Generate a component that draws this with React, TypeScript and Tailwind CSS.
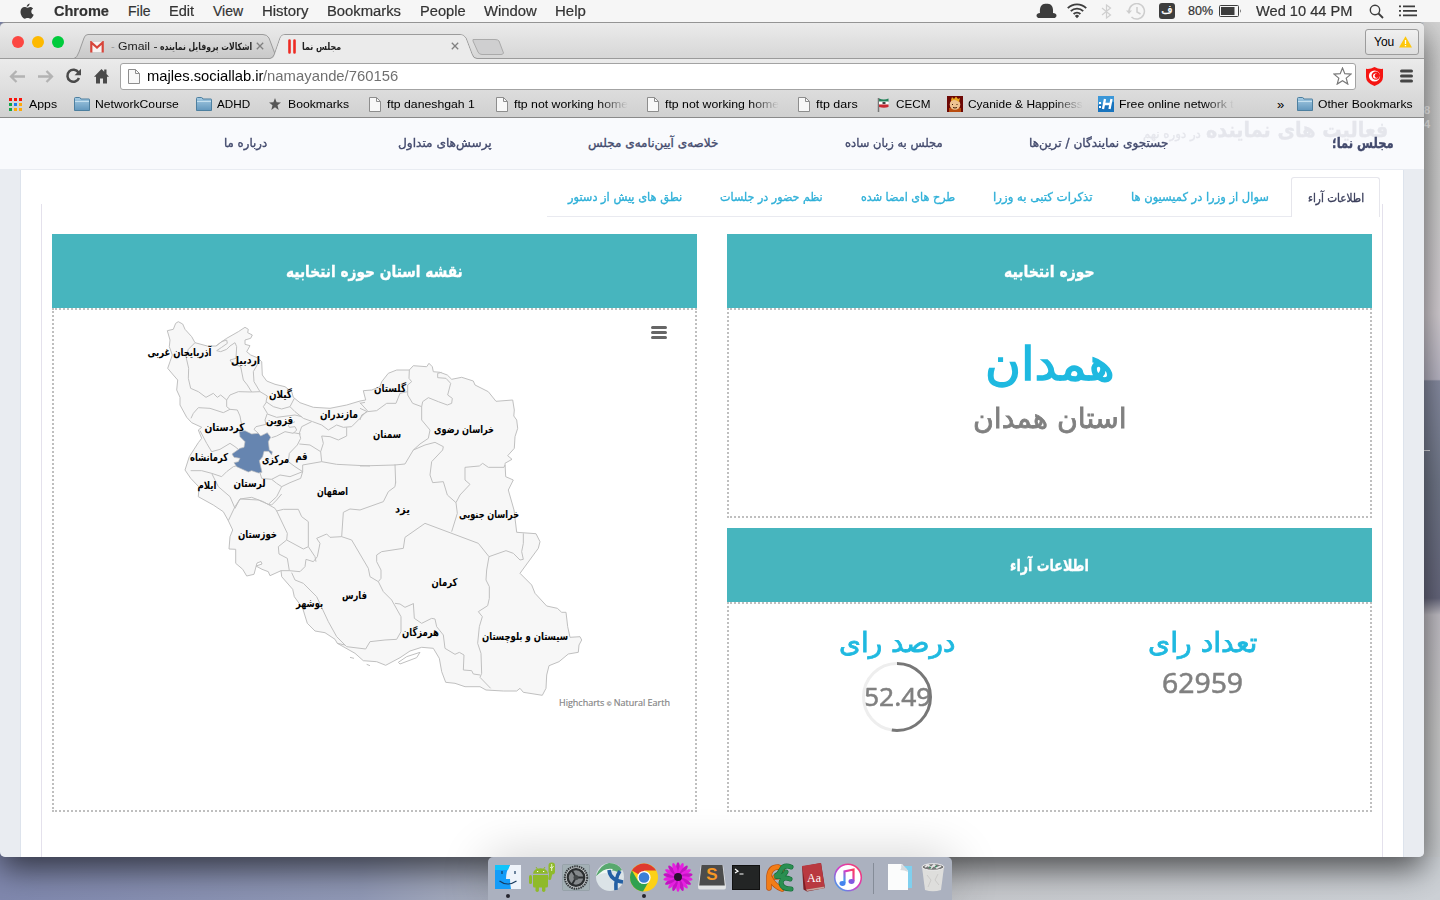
import { useLayoutEffect, useRef } from "react";
import type { ReactNode } from "react";

const FA = "font-['DejaVu_Sans','Noto_Sans',sans-serif]";
const MEDIUM = "[-webkit-text-stroke:0.35px_currentColor]";
const HEAVY = "[-webkit-text-stroke:0.8px_currentColor]";

/* Squeezes or stretches one line of text to the width of its box. */
function Fit({ className = "", rtl = false, children }: { className?: string; rtl?: boolean; children: ReactNode }) {
  const outer = useRef<HTMLSpanElement>(null);
  const inner = useRef<HTMLSpanElement>(null);
  useLayoutEffect(() => {
    if (outer.current && inner.current) {
      inner.current.style.transform = `scaleX(${outer.current.clientWidth / inner.current.offsetWidth})`;
    }
  }, []);
  return (
    <span ref={outer} dir="ltr" className={`flex shrink-0 items-center justify-start leading-none ${className}`}>
      <span ref={inner} dir={rtl ? "rtl" : "ltr"} className="inline-block shrink-0 origin-left whitespace-nowrap">
        {children}
      </span>
    </span>
  );
}

function MenuBar() {
  return (
    <div className="relative z-20 flex h-[22px] w-full shrink-0 items-center bg-[#f6f6f6] text-[14px] text-[#333] [-webkit-text-stroke:0.2px_#333]">
      <svg className="ml-[20px] h-[17px] w-[14px] shrink-0" viewBox="0 0 14 17" fill="#3d3d3d">
        <path d="M9.6.4c.1 1.700-1.300 3.300-2.900 3.300C6.500 2.200 8 .6 9.600.4zM7.200 4.700c.6 0 1.600-.8 3-.8 1.200 0 2.200.6 2.900 1.500-2.700 1.600-2.200 5.300.6 6.400-.6 1.700-2 3.900-3.300 3.900-1 0-1.500-.6-2.800-.6s-1.800.6-2.800.6C2.800 15.700.5 12 .5 8.800.5 5.700 2.500 4 4.500 4c1.200 0 2.100.7 2.700.7z" />
      </svg>
      <Fit className="ml-[20px] w-[55px] font-bold">Chrome</Fit>
      <Fit className="ml-[19px] w-[23px]">File</Fit>
      <Fit className="ml-[18px] w-[25px]">Edit</Fit>
      <Fit className="ml-[19px] w-[30px]">View</Fit>
      <Fit className="ml-[19px] w-[47px]">History</Fit>
      <Fit className="ml-[18px] w-[74px]">Bookmarks</Fit>
      <Fit className="ml-[19px] w-[46px]">People</Fit>
      <Fit className="ml-[18px] w-[53px]">Window</Fit>
      <Fit className="ml-[18px] w-[31px]">Help</Fit>
      <svg className="ml-[450px] h-[16px] w-[21px] shrink-0" viewBox="0 0 21 16" fill="#3d3d3d">
        <path d="M4 10C3.500 5 5 1.500 8 1c1.500-.2 3.500-.2 5 0C16 1.500 17.500 5 17 10c2 0 3.500 1 3.500 2.400 0 1.500-1 2.600-3 2.600h-14c-2 0-3-1.100-3-2.600C.5 11 2 10 4 10z" />
      </svg>
      <svg className="ml-[10px] h-[16px] w-[20px] shrink-0" viewBox="0 0 20 16" fill="none" stroke="#3d3d3d" strokeWidth="1.900">
        <path d="M.8 5.200a13 13 0 0 1 18.400 0M3.800 8.200a8.800 8.800 0 0 1 12.400 0M6.600 11a4.800 4.800 0 0 1 6.800 0" />
        <path d="M10 15.200 7.900 12.900a3 3 0 0 1 4.200 0z" fill="#3d3d3d" stroke="none" />
      </svg>
      <svg className="ml-[14px] h-[15px] w-[11px] shrink-0" viewBox="0 0 11 15" fill="none" stroke="#cfcfcf" strokeWidth="1.200">
        <path d="M1 4l8.500 7L5.500 14V1l4 3L1 11" />
      </svg>
      <svg className="ml-[14px] h-[17px] w-[20px] shrink-0" viewBox="0 0 20 17" fill="none" stroke="#cdcdcd" strokeWidth="1.500">
        <path d="M3 8.500A7.700 7.700 0 1 1 5.500 14M11 4v5l3.500 2" />
        <path d="M0 7.500h6L3 11z" fill="#cdcdcd" stroke="none" />
      </svg>
      <span className={`ml-[13px] flex h-[16px] w-[16px] shrink-0 items-center justify-center rounded-[3px] bg-[#3d3d3d] pb-[3px] text-[11px] leading-none text-white [-webkit-text-stroke:0.300px_white] ${FA}`}>ف</span>
      <Fit className="ml-[13px] w-[25px] text-[12.500px]">80%</Fit>
      <svg className="ml-[6px] h-[12px] w-[23px] shrink-0" viewBox="0 0 23 12">
        <rect x=".5" y=".5" width="19" height="11" rx="1" fill="none" stroke="#3d3d3d" />
        <rect x="2" y="2" width="13.500" height="8" fill="#3d3d3d" />
        <path d="M21 4q1.600 2 0 4z" fill="#3d3d3d" />
      </svg>
      <Fit className="ml-[14px] w-[96px]">Wed 10 44 PM</Fit>
      <svg className="ml-[17px] h-[15px] w-[15px] shrink-0" viewBox="0 0 15 15" fill="none" stroke="#3d3d3d" strokeWidth="1.400">
        <circle cx="6" cy="6" r="4.700" />
        <path d="M9.500 9.500 14 14" strokeWidth="1.800" />
      </svg>
      <svg className="ml-[15px] h-[12px] w-[18px] shrink-0" viewBox="0 0 18 12" fill="#3d3d3d">
        <path d="M0 .5h2v1.700H0zM0 5h2v1.700H0zM0 9.500h2v1.700H0zM4 .5h12v1.700H4zM4 5h14v1.700H4zM4 9.500h14v1.700H4z" />
      </svg>
    </div>
  );
}

function Cross({ className = "" }: { className?: string }) {
  return (
    <svg className={`h-[8px] w-[8px] shrink-0 ${className}`} viewBox="0 0 8 8" stroke="#808080" strokeWidth="1.300">
      <path d="M.8.8l6.400 6.400M7.200.8.800 7.200" />
    </svg>
  );
}

function TabStrip() {
  return (
    <div className="relative flex h-[36px] shrink-0 items-center bg-linear-to-b from-[#ebebeb] to-[#d6d6d6]">
      <svg className="absolute inset-0 h-[36px] w-[1424px]" viewBox="0 0 1424 36">
        <defs>
          <linearGradient id="tabOff" x2="0" y2="1">
            <stop stopColor="#dcdcdc" />
            <stop offset="1" stopColor="#c9c9c9" />
          </linearGradient>
        </defs>
        <path d="M74 35.500Q77 35 79 29L84 15Q85 11.500 88 11.500H263Q267 11.500 269 15L275 31L278 35.500" fill="url(#tabOff)" stroke="#9b9b9b" />
        <path d="M473 16.500H495Q498 16.500 499 18L503.500 30Q503 31.500 501 31.500H482Q479 31.500 478 29L473 18z" fill="#cfcfd0" stroke="#aaa" />
        <path d="M0 35.500H270Q273 35 274.500 31L280 15Q281 11.500 285 11.500H460Q464 11.500 466 15L472 31Q473.500 35.500 477 35.500H1424V36.500H0z" fill="none" stroke="#9b9b9b" />
        <path d="M271 36Q274 35 275 31L280.500 15Q281.500 12 285 12H460Q463.500 12 465.500 15L471.500 31Q473 35.500 476 36z" fill="#ebebeb" />
      </svg>
      <div className="relative flex h-full w-full items-center pt-[2px]">
        <span className="ml-[12px] h-[12px] w-[12px] rounded-full bg-[#fc4742]" />
        <span className="ml-[8px] h-[12px] w-[12px] rounded-full bg-[#fdb900]" />
        <span className="ml-[8px] h-[12px] w-[12px] rounded-full bg-[#00cb3c]" />
        <svg className="mt-[9px] ml-[26px] h-[12px] w-[14px] shrink-0" viewBox="0 0 14 12">
          <path d="M1 1h12v10H1z" fill="#f7f2f1" />
          <path d="M1.300 11.500V1.500L7 6.500l5.700-5v10" fill="none" stroke="#d8453a" strokeWidth="2.200" />
        </svg>
        <Fit className="mt-[9px] ml-[7px] w-[4px] text-[11px] text-[#999]">-</Fit>
        <Fit className="mt-[9px] ml-[3px] w-[39px] text-[11px] text-[#222]">Gmail -</Fit>
        <Fit rtl className={`mt-[9px] ml-[3px] w-[92px] text-[10px] font-bold text-[#222] ${FA}`}>اشکالات پروفایل نماینده</Fit>
        <Cross className="mt-[8px] ml-[4px]" />
        <svg className="mt-[9px] ml-[24px] h-[15px] w-[8px] shrink-0" viewBox="0 0 8 15" stroke="#ee2b23" strokeWidth="2.600" strokeLinecap="round">
          <path d="M1.500 1.500v12M6.500 1.500v12" />
        </svg>
        <Fit rtl className={`mt-[9px] ml-[6px] w-[39px] text-[10px] font-bold text-[#222] ${FA}`}>مجلس نما</Fit>
        <Cross className="mt-[8px] ml-[110px]" />
        <span className="ml-[906px] flex h-[26px] w-[54px] shrink-0 items-center rounded-[3px] border border-[#9c9c9c] bg-linear-to-b from-[#f0f0f0] to-[#dedede] text-[12px] text-black">
          <Fit className="ml-[8px] w-[20px]">You</Fit>
          <svg className="ml-[5px] h-[12px] w-[13px]" viewBox="0 0 13 12">
            <path d="M6.500.3 13 11.500H0z" fill="#fdc70c" />
            <path d="M6.500 4v4M6.500 9v1.300" stroke="#fff" strokeWidth="1.300" />
          </svg>
        </span>
      </div>
    </div>
  );
}

function DocIcon({ className = "" }: { className?: string }) {
  return (
    <svg className={`h-[15px] w-[12px] shrink-0 ${className}`} viewBox="0 0 12 15" fill="#f8f8f8" stroke="#8d8d8d">
      <path d="M.5.500h7l4 4v10H.5z" />
      <path d="M7.500.500v4h4" fill="none" />
    </svg>
  );
}

function FolderIcon({ className = "" }: { className?: string }) {
  return (
    <svg className={`h-[14px] w-[16px] shrink-0 ${className}`} viewBox="0 0 16 14">
      <defs>
        <linearGradient id="folder" x2="0" y2="1">
          <stop stopColor="#a5cbe3" />
          <stop offset="1" stopColor="#6297bd" />
        </linearGradient>
      </defs>
      <path d="M.5 13.500V1.500q0-1 1-1h4q1 0 1.300 1.500H15q.5 0 .5.500v11z" fill="url(#folder)" stroke="#4d7f9f" />
      <path d="M1 4.500h14" stroke="#c5e0ef" />
    </svg>
  );
}

function Toolbar() {
  return (
    <div className="flex h-[31px] shrink-0 items-center bg-linear-to-b from-[#ebebeb] to-[#dedede] pt-[3px]">
      <svg className="ml-[9px] h-[13px] w-[17px] shrink-0" viewBox="0 0 17 13" fill="none" stroke="#b3b3b3" strokeWidth="2.300">
        <path d="M16 6.500H2M7.500 1 2 6.500 7.500 12" />
      </svg>
      <svg className="ml-[11px] h-[13px] w-[17px] shrink-0" viewBox="0 0 17 13" fill="none" stroke="#b3b3b3" strokeWidth="2.300">
        <path d="M1 6.500h14M9.500 1 15 6.500 9.500 12" />
      </svg>
      <svg className="ml-[11px] h-[16px] w-[17px] shrink-0" viewBox="0 0 17 16">
        <path d="M13.500 4.500A6 6 0 1 0 14 10" fill="none" stroke="#4a4a4a" strokeWidth="2.500" />
        <path d="M16 .8v6.400H9.600z" fill="#4a4a4a" />
      </svg>
      <svg className="ml-[12px] h-[16px] w-[15px] shrink-0" viewBox="0 0 15 16" fill="#4a4a4a">
        <path d="M7.500 1 0 8.700h2V15.500h4v-5h3v5h4V8.700h2L12.500 6V1.500h-2.300v2.200z" />
      </svg>
      <div className="ml-[11px] flex h-[27px] w-[1236px] shrink-0 items-center rounded-[3px] border border-[#a3a3a3] bg-white font-['Liberation_Sans',Arial,sans-serif]">
        <DocIcon className="ml-[7px]" />
        <Fit className="ml-[7px] w-[116px] text-[14.500px] text-black">majles.sociallab.ir</Fit>
        <Fit className="w-[135px] text-[14.500px] text-[#707070]">/namayande/760156</Fit>
        <svg className="ml-[935px] h-[18px] w-[19px] shrink-0" viewBox="0 0 19 18" fill="none" stroke="#7a7a7a" strokeWidth="1.200">
          <path d="M9.500 1l2.300 5.700 6.200.4-4.800 4 1.600 6-5.300-3.400-5.300 3.400 1.600-6-4.800-4 6.200-.4z" />
        </svg>
      </div>
      <svg className="ml-[10px] h-[19px] w-[17px] shrink-0" viewBox="0 0 17 19">
        <path d="M8.500 0Q13 2.500 17 1.800V10q0 6-8.500 9Q0 16 0 10V1.800Q4 2.500 8.500 0z" fill="#f51512" />
        <circle cx="8.500" cy="9" r="5.600" fill="#fff" />
        <circle cx="9.800" cy="8.600" r="4.200" fill="#f51512" />
        <circle cx="9.600" cy="9" r="2.600" fill="#fff" />
        <circle cx="10.700" cy="8.800" r="2.100" fill="#f51512" />
      </svg>
      <svg className="ml-[17px] h-[14px] w-[13px] shrink-0" viewBox="0 0 13 14" stroke="#454545" strokeWidth="3" strokeLinecap="round">
        <path d="M1.500 2h10M1.500 7h10M1.500 12h10" />
      </svg>
    </div>
  );
}

const fade = "[mask-image:linear-gradient(to_right,black_75%,transparent_100%)]";
const dots = ["#f8130b", "#f8130b", "#f8130b", "#13a34a", "#1d7df3", "#fca90b", "#13a34a", "#fca90b", "#fca90b"];

function BookmarksBar() {
  return (
    <div className="flex h-[28px] shrink-0 items-center border-b border-[#8a8a8a] bg-linear-to-b from-[#dddddd] to-[#d0d0d0] pt-px text-[11px] text-black">
      <svg className="ml-[9px] h-[13px] w-[13px] shrink-0" viewBox="0 0 13 13">
        {dots.map((c, i) => (
          <rect key={i} x={(i % 3) * 5} y={Math.floor(i / 3) * 5} width="3" height="3" fill={c} />
        ))}
      </svg>
      <Fit className="ml-[7px] w-[28px]">Apps</Fit>
      <FolderIcon className="ml-[17px]" />
      <Fit className="ml-[5px] w-[84px]">NetworkCourse</Fit>
      <FolderIcon className="ml-[17px]" />
      <Fit className="ml-[5px] w-[33px]">ADHD</Fit>
      <svg className="ml-[19px] h-[12px] w-[12px] shrink-0" viewBox="0 0 12 12" fill="#555">
        <path d="M6 0l1.600 4.200 4.400.2-3.500 2.800L9.700 12 6 9.300 2.300 12l1.200-4.800L0 4.400l4.400-.2z" />
      </svg>
      <Fit className="ml-[7px] w-[61px]">Bookmarks</Fit>
      <DocIcon className="ml-[20px]" />
      <Fit className="ml-[6px] w-[88px]">ftp daneshgah 1</Fit>
      <DocIcon className="ml-[21px]" />
      <Fit className={`ml-[6px] w-[114px] ${fade}`}>ftp not working home</Fit>
      <DocIcon className="ml-[19px]" />
      <Fit className={`ml-[6px] w-[114px] ${fade}`}>ftp not working home</Fit>
      <DocIcon className="ml-[19px]" />
      <Fit className="ml-[6px] w-[42px]">ftp dars</Fit>
      <svg className="ml-[19px] h-[15px] w-[12px] shrink-0" viewBox="0 0 12 15">
        <path d="M1.500 1v14" stroke="#777" strokeWidth="1.500" />
        <path d="M2 1.500q5 2 9.500 0V5H2z" fill="#24825a" />
        <path d="M2 4.500h9.500V7.500H2z" fill="#fff" />
        <path d="M2 7.500h9.500V10Q7 11.500 2 10z" fill="#c92a32" />
        <path d="M5.500 5h3v2h-3z" fill="#444" />
      </svg>
      <Fit className="ml-[7px] w-[34px]">CECM</Fit>
      <svg className="ml-[17px] h-[16px] w-[16px] shrink-0" viewBox="0 0 16 16">
        <path d="M0 0h16v16H0z" fill="#6d0805" />
        <path d="M2 12h12v4H2z" fill="#b94d10" />
        <circle cx="8" cy="8.500" r="5.300" fill="#eec391" />
        <path d="M4 4l1-3 2 2 2-2.500L11 3l2-1-1 4Q8 2.500 4 5z" fill="#e9a81e" />
        <path d="M5.500 8v1M10 8v1M6 11.500q2 1 4 0" stroke="#40200a" fill="none" />
      </svg>
      <Fit className={`ml-[5px] w-[115px] ${fade}`}>Cyanide &amp; Happiness</Fit>
      <svg className="ml-[15px] h-[16px] w-[16px] shrink-0" viewBox="0 0 16 16">
        <path d="M0 0h16v16H0z" fill="#1873bd" />
        <path d="M0 0h16v6L0 9z" fill="#3b97d8" />
        <path d="M1 6h2v2H1zM1 10h2v2H1z" fill="#fff" />
        <path d="M7 3 5 13M13.500 3l-2 10M6 8h7" stroke="#fff" strokeWidth="2.300" />
      </svg>
      <Fit className={`ml-[5px] w-[115px] ${fade}`}>Free online network t</Fit>
      <Fit className="ml-[43px] w-[7px] text-[13px]">»</Fit>
      <FolderIcon className="ml-[13px]" />
      <Fit className="ml-[5px] w-[95px]">Other Bookmarks</Fit>
    </div>
  );
}

function SiteNav() {
  return (
    <div className={`relative flex h-[52px] shrink-0 items-center border-b border-[#e9ecf2] bg-[#f9fafd] pb-[2px] text-[12px] text-[#434a6d] ${MEDIUM} ${FA}`}>
      <div className="absolute top-[2px] left-[1143px] flex items-center text-[#e5e6ec]">
        <Fit rtl className="mt-[6px] w-[58px] text-[12px]">در دوره نهم</Fit>
        <Fit rtl className="ml-[5px] w-[182px] text-[21px] font-bold">فعالیت های نماینده</Fit>
      </div>
      <div className="relative flex items-center">
        <Fit rtl className="ml-[224px] w-[43px]">درباره ما</Fit>
        <Fit rtl className="ml-[131px] w-[94px]">پرسش‌های متداول</Fit>
        <Fit rtl className="ml-[96px] w-[130px]">خلاصه‌ی آیین‌نامه‌ی مجلس</Fit>
        <Fit rtl className="ml-[127px] w-[98px]">مجلس به زبان ساده</Fit>
        <Fit rtl className="ml-[86px] w-[139px]">جستجوی نمایندگان / ترین‌ها</Fit>
        <Fit rtl className="ml-[164px] w-[62px] text-[14px] font-bold">مجلس نما؛</Fit>
      </div>
    </div>
  );
}

function PageTabs() {
  return (
    <div className={`flex h-[40px] shrink-0 text-[12px] text-[#2fb0d8] ${MEDIUM} ${FA}`}>
      <div className="ml-[526px] flex w-[744px] items-center border-b border-[#e9eaf0]">
        <Fit rtl className="ml-[21px] w-[114px]">نطق های پیش از دستور</Fit>
        <Fit rtl className="ml-[38px] w-[103px]">نظم حضور در جلسات</Fit>
        <Fit rtl className="ml-[38px] w-[94px]">طرح های امضا شده</Fit>
        <Fit rtl className="ml-[38px] w-[100px]">تذکرات کتبی به وزرا</Fit>
        <Fit rtl className="ml-[38px] w-[138px]">سوال از وزرا در کمیسیون ها</Fit>
      </div>
      <div className="flex w-[89px] items-center rounded-t-[3px] border border-b-0 border-[#e6e6ec] pl-[16px] text-[#3b3f5c]">
        <Fit rtl className="w-[56px]">اطلاعات آراء</Fit>
      </div>
    </div>
  );
}

const outline =
  "178.3,321.7 182.7,324 185,329.3 191.7,336.7 195,342.7 207.3,346 216,346 221.7,341.7 226.7,338.3 238.3,331.7 245,327.3 248.3,329.3 247.7,332.7 252.3,335 250.7,338.3 245,340 245,344.3 250,345.7 246.7,351.7 250.7,355 258,358 261.7,361.7 262.3,375 266.7,381 275,384.3 285,386.7 291.7,391.7 293.3,397.3 300,402.7 313.3,407.3 330,408.3 346.7,405 360,401 365.7,400 363.3,390.7 371.7,390 380,386.7 381.7,381.7 388.3,373.3 396.7,370 409.3,370 413.3,365.7 426.7,366.7 429,363.3 432.3,366.7 433.3,371.7 440,372.3 447.3,375 451.7,379.3 461.7,377.3 473.3,381 475,385 488.3,391.7 496,401.3 512.7,400 514.3,410 513.8,416 516.7,420 517.7,428.3 515,436.7 514.3,448.3 507.7,455.7 512,459.3 505,463.3 505.7,476.7 513.3,480 508.3,490 514,510 516.7,532.3 536,533.7 540,541.7 538.3,548.3 520,573.3 531.7,585 535,593.3 546.7,606 557.3,608.3 561.7,612.3 566,612.3 567.7,626.7 570,637.3 580,636.7 581.7,640 579,645 578.3,652.3 568.3,654 559,661.7 549,665.7 546.7,675 546,688.3 542.3,695.3 523.3,692.3 520,688.3 516.7,691 503.3,691 486,690 480,686.7 465,686.7 455,683.3 445.7,682.3 441.7,671.7 439.3,658.3 433.3,648.3 421.7,647.3 410,651 400,657.700 385.700,665.300 376.700,661.700 363.300,660.700 355,653.300 337.300,643.300 335,639.300 325,632.700 315,631 307.300,623.300 302.700,608.300 294.300,596.700 292.700,589.300 281.700,576.700 281,570.700 270,575.700 268.300,571.700 262,569.300 256,566 262,564 261,561.500 257,563 254,574.300 246.700,576 242.700,569.300 235.700,563.300 235.700,549.300 229,549 230,536.700 232.700,530 228.300,520.700 223.300,511.700 213.300,505 198.300,496.700 199,487 190.700,478.300 185,470 189.300,456.700 198.300,442.700 201.700,438.300 198.300,430 201.700,427.300 191.700,422.700 186.700,417.300 180,405 180,397.300 176.700,390 177.700,380 173.300,375 167.700,368.300 170,361.700 172.300,355 169.300,346.700 170,340 167.300,330.700 173.300,329.300 175.700,323.300";

const hamadan =
  "328,365 345,362 365,372 385,370 392,378 412,368 422,382 415,395 418,420 427,425 425,435 416,424 402,424 398,440 388,452 396,487 385,489 365,482 355,486 320,470 312,458 325,455 330,445 312,442 306,432 330,415 342,412 345,395 330,380";

/* Province borders, grouped by map quarter: offset of the quarter and its lines in thirds of a pixel. */
const borders: { at: string; lines: string[] }[] = [
  {
    at: "translate(130 310) scale(.33333)",
    lines: [
      "195,98 175,118 168,140 176,175 175,205 182,235 205,245 228,262 250,250 262,262 272,255 290,270",
      "290,270 300,255 325,245 365,246 390,245 412,258",
      "290,270 290,290 300,298 280,308 240,295 205,293 190,310 183,325",
      "300,298 322,300 330,318 335,345 328,370",
      "258,108 275,95 290,90 292,100 275,112 260,122 272,125 290,118 300,108 315,98 320,110 318,145 300,150 305,158 332,170 340,210 352,225 365,246",
      "390,150 370,185 372,215 390,245",
      "412,258 408,275 430,290 455,297 480,290 493,265",
      "410,275 400,290 412,310 405,330 408,343 378,350 372,358 385,370",
      "480,290 495,305 520,325 548,335 575,345 595,360 620,345 640,352 665,350 690,325 712,302 690,278",
      "412,312 440,322 495,315 515,320",
      "495,335 475,345 478,352 495,350 500,360 490,370 465,365 440,378 425,383",
      "545,335 515,350 508,370 512,385 502,405 478,430 475,455 495,470 518,485",
      "508,402 540,405 572,425",
      "490,368 512,372",
      "650,352 650,378 625,390 600,380 575,378 580,400 572,425 575,455 518,465 518,485 480,500 450,495 425,508",
      "575,455 620,463 720,468",
      "210,362 230,400 245,425 270,418 300,400 315,410 325,418",
      "182,482 215,482 245,490 275,500 290,485 310,470 318,468",
      "245,490 265,530 300,560 315,595",
      "390,488 395,505 425,508 440,520 455,530 440,560 415,583 385,570 330,567 315,595",
      "455,530 480,518 512,505 518,485",
    ],
  },
  {
    at: "translate(360 340) scale(.33333)",
    lines: [
      "148,90 147,115 155,125 143,135 143,165 158,190 185,200 188,185 205,173 235,185 262,195 275,190 277,175 263,165 272,130 258,115 233,113 233,100 245,97",
      "185,200 185,240 210,270 205,295 180,312 160,330 135,372 105,375 0,378",
      "160,330 195,315 225,307 250,320 248,330 215,365 210,405 218,428 250,425 262,465 288,488",
      "15,187 0,190",
      "0,205 22,215 50,212 80,190 108,190 120,160 143,155",
      "22,215 5,225 0,240",
      "105,373 107,430",
      "435,375 432,382 385,382 368,370 358,378 315,382 315,420 330,433 300,465 288,488 292,520 275,575",
    ],
  },
  {
    at: "translate(200 480) scale(.33333)",
    lines: [
      "205,73 215,75 230,60 245,42",
      "85,122 105,80 120,57 155,52 190,65 225,85 230,93 262,160 260,180 235,200 237,222 262,235 268,272 243,272",
      "230,93 250,88 295,88 305,110 325,125 325,200 345,230 348,245",
      "260,180 310,207 325,200",
      "268,272 300,275 315,260 318,238 340,245 352,230 360,190 350,175 380,162 390,172 425,170 455,180 505,265 510,290 535,305 543,295 543,270 530,245 530,225 545,215 610,205 615,172 675,130",
      "425,170 430,97 450,87 480,90 550,65 565,35 585,20 587,5",
      "535,305 550,335 575,360 603,410 603,455 590,478 555,480 510,485 497,507 440,500 410,470 385,425 350,350 310,310 285,300 275,278",
      "435,495 412,490",
      "585,370 600,372 615,382 640,371",
      "595,547 620,530 660,517 650,533 600,552 595,547",
      "450,532 462,535",
      "500,553 510,557",
    ],
  },
  {
    at: "translate(400 520) scale(.33333)",
    lines: [
      "75,10 235,70 267,110 318,92 340,100 360,120 370,118 365,95 370,70 370,40",
      "267,110 260,150 258,180 268,200 268,235 263,257 235,275 247,290 238,320 233,370 243,400 245,460 240,472 272,505",
      "40,250 43,295 65,310 95,295 105,297 110,320 130,345 135,385 165,403 178,397 192,405 190,450 215,452 220,462 240,465",
    ],
  },
];

const provinces: [string, number, number, number][] = [
  ["آذربایجان غربی", 179.500, 355.500, 64],
  ["اردبیل", 245.500, 363.500, 29],
  ["گیلان", 280.500, 397.500, 23],
  ["قزوین", 279.500, 423.500, 27],
  ["مازندران", 339, 417.500, 38],
  ["کردستان", 224.500, 430.500, 40],
  ["کرمانشاه", 209, 460.500, 38],
  ["مرکزی", 275.500, 462.500, 27],
  ["قم", 301.500, 459.500, 12],
  ["ایلام", 207, 488.500, 19],
  ["لرستان", 249.500, 486.500, 32],
  ["اصفهان", 332.500, 494.500, 31],
  ["گلستان", 390, 391.500, 32],
  ["سمنان", 387, 437.500, 28],
  ["خراسان رضوی", 464, 432.500, 60],
  ["یزد", 402.500, 512.500, 15],
  ["خراسان جنوبی", 489, 517.500, 60],
  ["خوزستان", 257.500, 537.500, 39],
  ["بوشهر", 309.500, 606.500, 27],
  ["فارس", 354.500, 598.500, 25],
  ["هرمزگان", 420.500, 635.500, 37],
  ["کرمان", 444.500, 585.500, 26],
  ["سیستان و بلوچستان", 525, 639.500, 86],
];

function IranMap() {
  return (
    <svg className={`h-[500px] w-[641px] ${FA}`} viewBox="54 310 641 500">
      <polygon points={outline} fill="#f7f7f7" stroke="#c0c0c0" strokeLinejoin="round" />
      {borders.map((b) => (
        <g key={b.at} transform={b.at} fill="none" stroke="#c0c0c0" strokeWidth="3" strokeLinejoin="round">
          {b.lines.map((l) => (
            <polyline key={l} points={l} />
          ))}
        </g>
      ))}
      <g transform="translate(130 310) scale(.33333)">
        <polygon points={hamadan} fill="#6685b0" stroke="#c0c0c0" strokeWidth="2" />
      </g>
      {provinces.map(([name, x, y, w]) => (
        <text key={name} x={x} y={y} direction="rtl" textAnchor="middle" textLength={w} lengthAdjust="spacingAndGlyphs" fontSize="11" fontWeight="bold" fill="#000">
          {name}
        </text>
      ))}
      <path d="M652.500 327.500h13M652.500 332.500h13M652.500 337.500h13" stroke="#666" strokeWidth="3" strokeLinecap="round" />
      <text x="559" y="706" textLength="111" lengthAdjust="spacingAndGlyphs" fontSize="9.500" fill="#858585" stroke="#858585" strokeWidth=".2" className="font-['Open_Sans',sans-serif]">
        Highcharts <tspan fontSize="6">©</tspan> Natural Earth
      </text>
    </svg>
  );
}

function Panel({ title, body, children }: { title: ReactNode; body: string; children: ReactNode }) {
  return (
    <section className="flex w-[645px] flex-col">
      <h3 className={`flex h-[74px] items-center justify-center bg-[#47b5be] pt-[2px] text-[16px] font-bold text-white ${MEDIUM} ${FA}`}>{title}</h3>
      <div className={`border-2 border-dotted border-[#bfbfbf] ${body}`}>{children}</div>
    </section>
  );
}

function Page() {
  return (
    <div className="flex min-h-0 grow bg-[#e9ecf1] px-[20px]">
      <div className="flex w-[1384px] flex-col border-x border-[#dde3ec] bg-white pt-[7px]">
        <PageTabs />
        <div className="-mt-[13px] ml-[20px] flex w-[1342px] grow items-start border-x border-[#e4e1ec] px-[10px] pt-[30px]">
          <Panel title={<Fit rtl className="w-[177px]">نقشه استان حوزه انتخابیه</Fit>} body="h-[504px]">
            <IranMap />
          </Panel>
          <div className="ml-[30px] flex flex-col gap-[10px]">
            <Panel title={<Fit rtl className="w-[91px]">حوزه انتخابیه</Fit>} body={`flex h-[210px] flex-col items-center pt-[28px] ${HEAVY} ${FA}`}>
              <Fit rtl className="h-[52px] w-[130px] text-[46px] text-[#1fb9e0] [-webkit-text-stroke:1.4px_currentColor]">همدان</Fit>
              <Fit rtl className="mt-[11px] h-[36px] w-[154px] text-[28px] text-[#808080]">استان همدان</Fit>
            </Panel>
            <Panel title={<Fit rtl className="w-[79px]">اطلاعات آراء</Fit>} body={`flex h-[210px] pt-[20px] ${HEAVY} ${FA}`}>
              <div className="flex w-[336px] flex-col items-center">
                <Fit rtl className="h-[36px] w-[116px] text-[27px] text-[#1fb9e0]">درصد رای</Fit>
                <div className="relative mt-[2px] flex h-[70px] w-[70px] items-center justify-center pb-[3px]">
                  <Fit className="w-[67px] font-['Noto_Sans',sans-serif] text-[26px] text-[#808080] [-webkit-text-stroke:0.500px_#808080]">52.49</Fit>
                  <svg className="absolute inset-0 h-[70px] w-[70px]" viewBox="0 0 70 70" fill="none" strokeWidth="3">
                    <circle cx="35" cy="35" r="33.500" stroke="#eee" pathLength="100" strokeDasharray="47.500 52.500" strokeDashoffset="-52.500" transform="rotate(-90 35 35)" />
                    <circle cx="35" cy="35" r="33.500" stroke="#777" pathLength="100" strokeDasharray="52.500 47.500" transform="rotate(-90 35 35)" />
                  </svg>
                </div>
              </div>
              <div className="flex w-[275px] flex-col items-center">
                <Fit rtl className="h-[36px] w-[110px] text-[27px] text-[#1fb9e0]">تعداد رای</Fit>
                <Fit className="mt-[8px] w-[81px] font-['Noto_Sans',sans-serif] text-[28px] text-[#808080] [-webkit-text-stroke:0.500px_#808080]">62959</Fit>
              </div>
            </Panel>
          </div>
        </div>
      </div>
    </div>
  );
}

function DockIcon({ children, running = false }: { children: ReactNode; running?: boolean }) {
  return (
    <div className="flex w-[34px] flex-col items-center pt-[4px]">
      <svg className="h-[32px] w-[32px] overflow-visible" viewBox="0 0 32 32">{children}</svg>
      {running && <span className="mt-[1px] h-[4px] w-[4px] rounded-full bg-[#25252f]" />}
    </div>
  );
}

function Dock() {
  return (
    <div className="relative flex h-[43px] w-[464px] rounded-t-[5px] bg-[#abb1bf] pl-[3px] shadow-[0_0_50px_rgba(0,0,0,0.2)]">
      <DockIcon running>
        <path d="M3 4h26v24H3z" fill="#eef3fa" />
        <path d="M3 4h15q-4 6-4 14h4q0 5 1 10H3z" fill="#159cf8" />
        <path d="M3 4h15l-2 5H3z" fill="#10c4fb" />
        <path d="M10 10v3M23 10v3M7.500 20q8 6 17 0" stroke="#173b60" strokeWidth="1.200" fill="none" />
      </DockIcon>
      <DockIcon>
        <g fill="#8fba2b">
          <path d="M7 14h15v11q0 1.500-1.500 1.500H8.500Q7 26.500 7 25zM7 12.800Q7.500 7.500 14.500 7.300 21.500 7.500 22 12.800z" />
          <rect x="3" y="14" width="3" height="9" rx="1.500" />
          <rect x="23" y="9" width="3" height="10" rx="1.500" transform="rotate(12 24 14)" />
          <rect x="9.500" y="24" width="3.400" height="7" rx="1.700" />
          <rect x="16" y="24" width="3.400" height="7" rx="1.700" />
          <rect x="22.500" y="1.500" width="6.500" height="12" rx="3" />
          <path d="M10 6l2 3M19 6l-2 3" stroke="#8fba2b" />
        </g>
        <path d="M25.700 3v7M24 6l1.700 1.500L27.500 5" stroke="#e6f2c8" fill="none" />
        <path d="M11 10.500h1.200M17 10.500h1.200" stroke="#fff" strokeWidth="1.200" />
      </DockIcon>
      <DockIcon>
        <rect x="2.500" y="3.500" width="27" height="26" rx="1" fill="#a3b0b5" stroke="#8d999f" strokeWidth=".6" />
        <circle cx="16" cy="16.500" r="11.200" fill="#c0c4c6" stroke="#34383b" strokeWidth="2" strokeDasharray="1.500 .8" />
        <circle cx="16" cy="16.500" r="8.300" fill="#85898c" stroke="#2b2e30" strokeWidth="2.200" />
        <path d="M16 16.500h8M16 16.500l-4-7M16 16.500l-4 7" stroke="#2b2e30" strokeWidth="1.800" />
        <circle cx="16" cy="16.500" r="2.500" fill="#44484a" />
      </DockIcon>
      <DockIcon>
        <circle cx="16" cy="16" r="14" fill="#dbe3e7" />
        <path d="M2 15Q6 4 15 2q9 0 13 7l-4 2Q14 6 2 15z" fill="#58a86e" />
        <path d="M3 15Q10 6 19 8q-3 2-3 5Q9 10 3 15z" fill="#f0f7f4" />
        <path d="M15 9q1 10 14 12M22 29q-1-12 4-19" fill="none" stroke="#235fa3" strokeWidth="3.600" />
      </DockIcon>
      <DockIcon running>
        <circle cx="16" cy="16.500" r="14" fill="#fcd116" />
        <path d="M16 16.500 3.900 9.500A14 14 0 0 1 28.100 9.500H16z" fill="#df3a2f" />
        <path d="M3.900 9.500A14 14 0 0 0 15 30.500l6-10.500-5 2-6-2z" fill="#2fa14f" />
        <circle cx="16" cy="16.500" r="6.600" fill="#fff" />
        <circle cx="16" cy="16.500" r="5.300" fill="#3b7fd6" />
      </DockIcon>
      <DockIcon>
        {Array.from({ length: 18 }, (_, i) => (
          <ellipse key={i} cx="16" cy="7.500" rx="2" ry="6.300" fill={i % 2 ? "#e620e0" : "#c413c3"} transform={`rotate(${i * 20} 16 16)`} />
        ))}
        <circle cx="16" cy="16" r="4" fill="#2a1230" />
      </DockIcon>
      <DockIcon>
        <path d="M5 4h22l3 22q0 2.500-2 2.500H4q-2 0-2-2.500z" fill="#e3e4e5" />
        <path d="M5.500 4h21l2.300 20.500H3.200z" fill="#4c4c4c" />
        <text x="16" y="19" textAnchor="middle" fontSize="17" fontWeight="bold" fill="#f79724">S</text>
      </DockIcon>
      <DockIcon>
        <rect x="2.500" y="4.500" width="27" height="24" fill="#232525" stroke="#111" />
        <path d="M5 8l3 2.200L5 12M9.500 13h4" stroke="#fff" fill="none" strokeWidth="1.200" />
      </DockIcon>
      <DockIcon>
        <path d="M5 27V15Q6 6 14 6q6 1 4 6-1 4-7 4M6 17q4 8 12 11" stroke="#b94c0b" strokeWidth="5.500" strokeLinecap="round" fill="none" />
        <path d="M5 27V15Q6 6 14 6q6 1 4 6-1 4-7 4M6 17q4 8 12 11" stroke="#f27d18" strokeWidth="4.300" strokeLinecap="round" fill="none" />
        <path d="M27 6q-7-3-10 3-2 5-6 6 8 2 11-4M26 18q-8-3-9 4 1 6 10 6" stroke="#146a38" strokeWidth="5" strokeLinecap="round" fill="none" />
        <path d="M27 6q-7-3-10 3-2 5-6 6 8 2 11-4M26 18q-8-3-9 4 1 6 10 6" stroke="#2a8f51" strokeWidth="3.800" strokeLinecap="round" fill="none" />
      </DockIcon>
      <DockIcon>
        <path d="M4 5.500 23 2l4 25-18 3.500-3.500-2z" fill="#7e1e24" />
        <path d="M4 5 23 2l3.500 23.500L8 28.500z" fill="#b93940" />
        <path d="M8 28.500 26.500 25.500v1.800L9 30z" fill="#c9a49c" />
        <text x="16" y="21" textAnchor="middle" fontSize="12" fill="#fff" fontFamily="Liberation Serif">Aa</text>
      </DockIcon>
      <DockIcon>
        <defs>
          <linearGradient id="tunes" x1="1" x2="0" y2="1">
            <stop stopColor="#fb3e58" />
            <stop offset=".5" stopColor="#d63bc8" />
            <stop offset="1" stopColor="#26b3f4" />
          </linearGradient>
        </defs>
        <circle cx="16" cy="16.500" r="13.300" fill="#fff" stroke="url(#tunes)" strokeWidth="1.600" />
        <path d="M12.500 22V10.500l9-2V20" fill="none" stroke="url(#tunes)" strokeWidth="2.200" />
        <ellipse cx="10.500" cy="22.500" rx="3" ry="2.400" fill="#4483ee" />
        <ellipse cx="19.500" cy="20.500" rx="3" ry="2.400" fill="#8159e0" />
      </DockIcon>
      <span className="mt-[6px] ml-[8px] h-[31px] w-px bg-[#858c98]" />
      <span className="w-[8px]" />
      <DockIcon>
        <path d="M20 5h9v22h-9z" fill="#7fd0ef" />
        <path d="M5 3h14l6 7v19H5z" fill="#fbfcfc" />
        <path d="M18 3q1 5-1 6 5 0 8 2l-1-3z" fill="#d5dade" />
      </DockIcon>
      <DockIcon>
        <path d="M5 6h22l-3 23q-8 2.500-16 0z" fill="#dededc" />
        <ellipse cx="16" cy="6" rx="11" ry="3.300" fill="#777" stroke="#eee" />
        <path d="M8 6l3-2 3 3 3-3 3 3 4-2" stroke="#e7e6e6" strokeWidth="1.800" fill="none" />
        <path d="M12 6l2 1M18 6l2-1" stroke="#438b67" strokeWidth="1.500" />
        <path d="M10 14l4 5-3 7M21 13l-3 6 4 5" stroke="#cccbc9" fill="none" />
      </DockIcon>
    </div>
  );
}

export default function App() {
  return (
    <div className="relative flex h-[900px] w-[1440px] flex-col overflow-hidden bg-[linear-gradient(90deg,#8088ae_0%,#9098b5_25%,#b3b8c2_38%,#c6c8cc_65%,#cdd1d6_100%)] font-['Liberation_Sans',Arial,sans-serif]">
      <MenuBar />
      <div className="flex h-[835px] shrink-0">
        <div className="relative z-10 flex w-[1424px] shrink-0 flex-col overflow-hidden rounded-[5px] border-t border-[#949494] shadow-[0_12px_32px_rgba(0,0,0,0.62)]">
          <TabStrip />
          <Toolbar />
          <BookmarksBar />
          <SiteNav />
          <Page />
        </div>
        <div className="flex w-[16px] flex-col overflow-hidden bg-[linear-gradient(180deg,#d5d5d5_0%,#d2d2d2_20%,#d9d3d8_35%,#bcb9c8_42.800%,#8a8fa5_43%,#737a8c_55%,#68697f_69%,#c6c3ca_71%,#cccccc_85%,#cccfd2_100%)] text-[11px] leading-[14px] font-bold text-white">
          <span className="mt-[81px]">8</span>
          <span>4</span>
          <span className="mt-[319px] h-px w-[6px] bg-[#e5e5eb]" />
        </div>
      </div>
      <div className="relative z-20 flex h-[43px] shrink-0 justify-center">
        <Dock />
      </div>
    </div>
  );
}
